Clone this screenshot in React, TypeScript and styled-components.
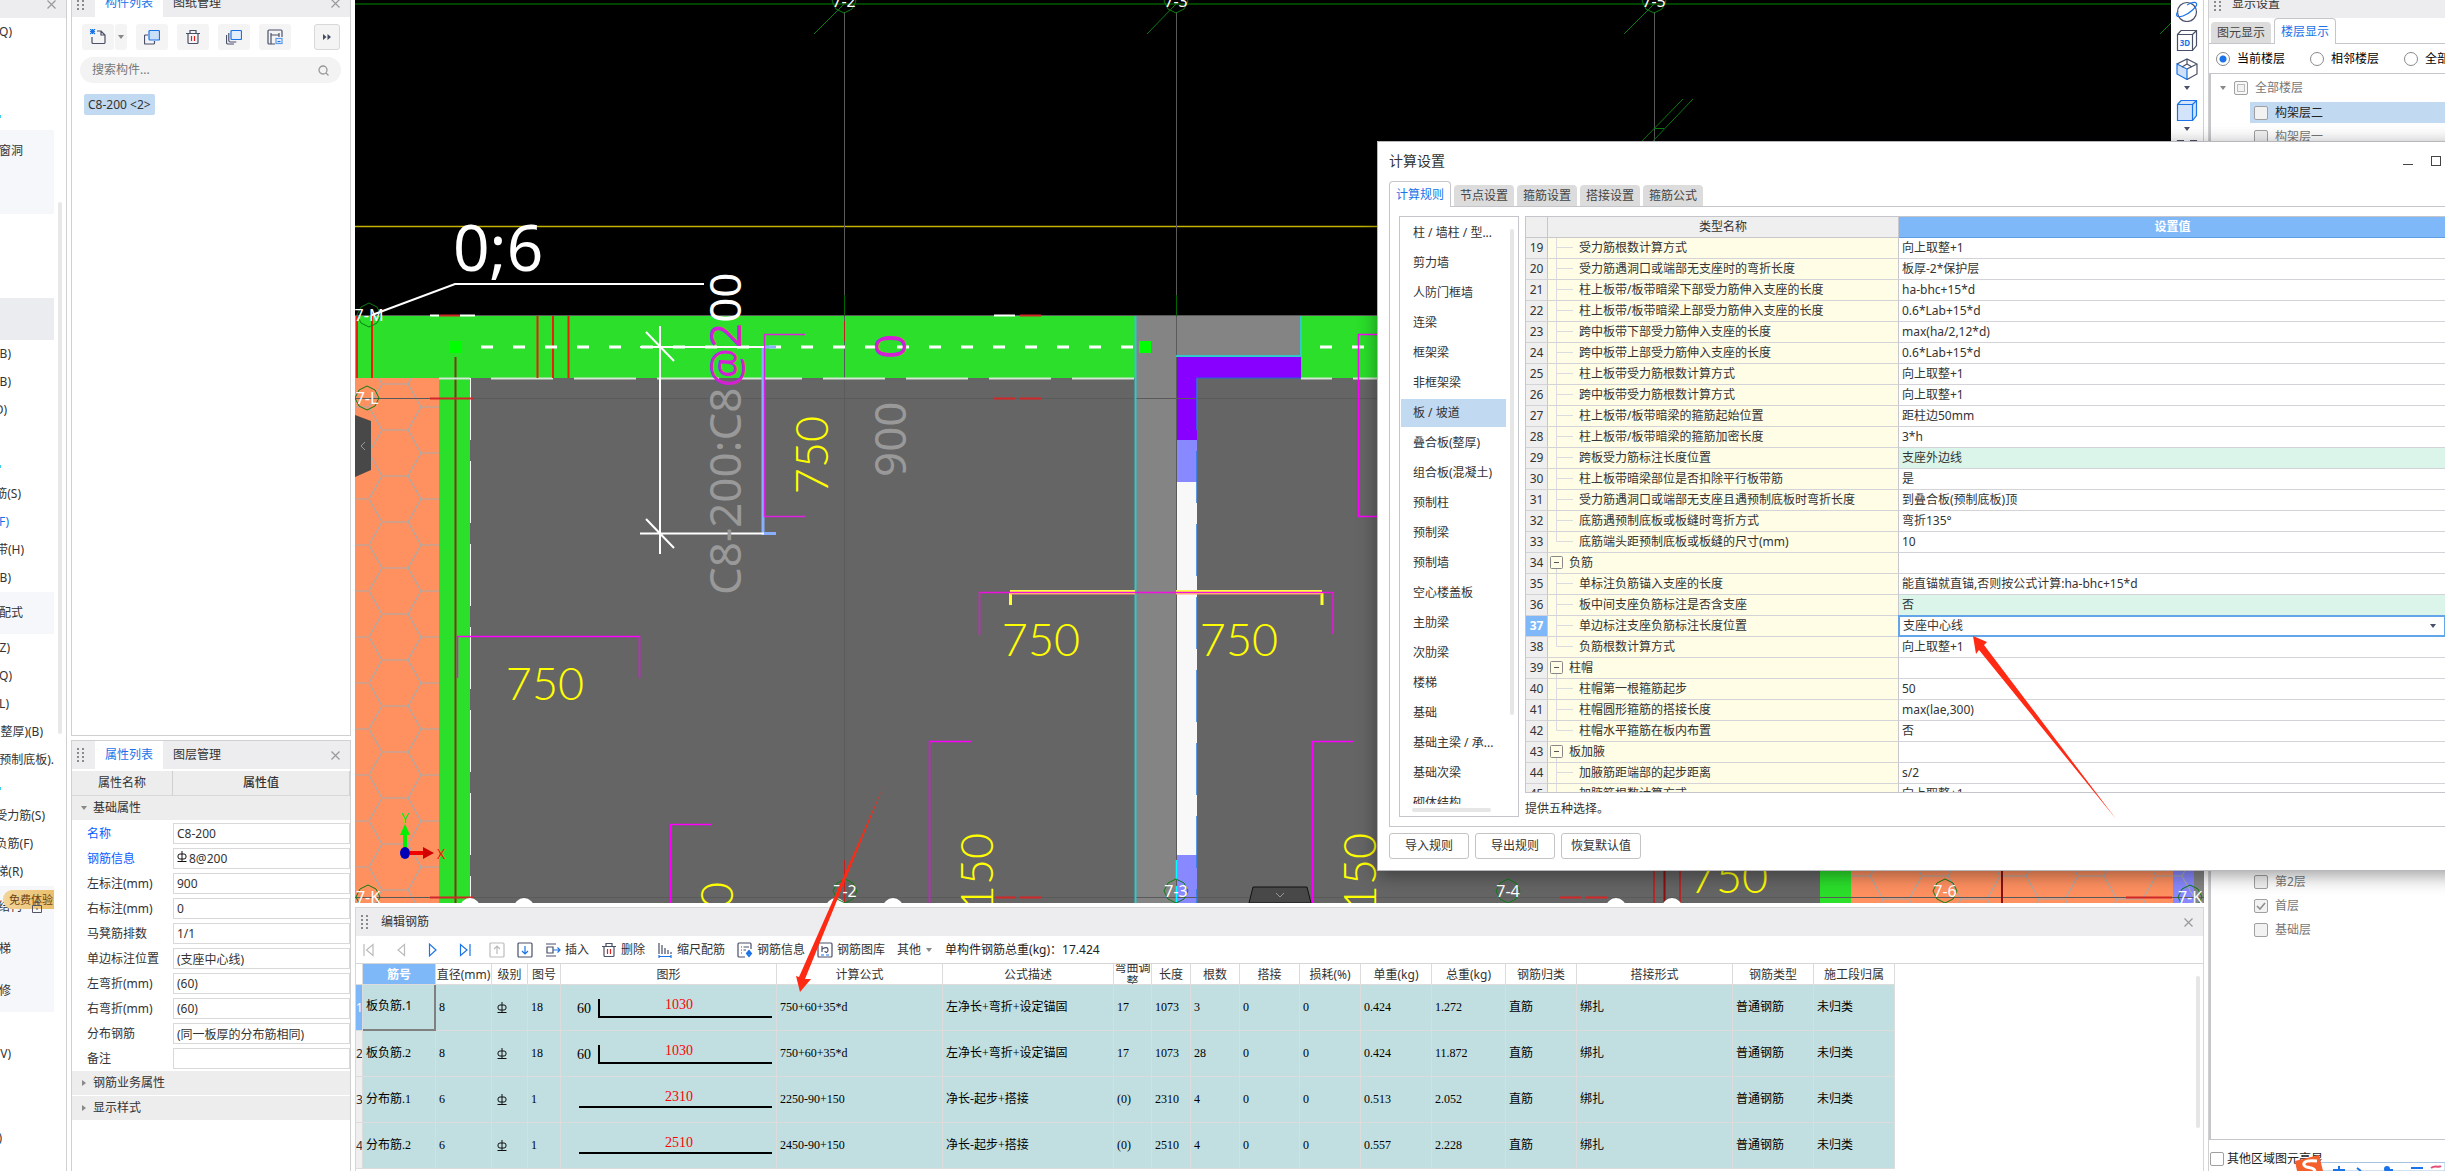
import React from "react";
import styled, { createGlobalStyle, css } from "styled-components";

const UI = `"Noto Sans", "Noto Sans CJK SC", sans-serif`;
const SONG = `"Liberation Serif", "Noto Sans CJK SC", serif`;

const Global = createGlobalStyle`
  *, *::before, *::after { box-sizing: border-box; }
  body { margin: 0; background: #fff; overflow: hidden; }
  body, button, input, select { font-family: ${UI}; font-size: 12px; line-height: 16px; color: #333; }
  button { border: 0; padding: 0; background: none; }
  svg { display: block; flex: none; }
  ul { list-style: none; margin: 0; padding: 0; }
`;

const Page = styled.div`
  position: relative;
  display: flex;
  height: 100vh;
  overflow: hidden;
  background: #fff;
`;

/* ---------- shared parts ---------- */

const PanelHead = styled.div<{ $lift?: number }>`
  display: flex;
  align-items: center;
  flex: none;
  height: 28px;
  margin-top: ${(p) => -(p.$lift ?? 0)}px;
  background: #ededf0;
`;

const Grip = styled.span`
  width: 8px;
  height: 14px;
  margin: 0 10px 0 5px;
  background: radial-gradient(circle at 1px 1px, #8a8a8a 1px, transparent 1px) 0 0 / 5px 4px;
`;

const HeadTab = styled.button<{ $on?: boolean }>`
  height: 28px;
  padding: 0 10px;
  background: ${(p) => (p.$on ? "#fff" : "transparent")};
  color: ${(p) => (p.$on ? "#1a73e8" : "#333")};
`;

const CloseBtn = styled.button`
  margin-left: auto;
  margin-right: 10px;
`;

const Cross = () => (
  <svg width="9" height="9" viewBox="0 0 9 9" stroke="#999" strokeWidth="1.2">
    <path d="M.5.5l8 8M8.5.5l-8 8" />
  </svg>
);

const Caret = ({ c = "#888", right = false }: { c?: string; right?: boolean }) => (
  <svg width="8" height="8" viewBox="0 0 8 8" fill={c}>
    <path d={right ? "M2 1l4 3-4 3z" : "M1 2h6L4 6z"} />
  </svg>
);

const RebarMark = () => (
  <svg width="10" height="12" viewBox="0 0 10 12" fill="none" stroke="#111" strokeWidth="1">
    <path d="M5 0v11M.5 10.500h9" />
    <rect x="1" y="3" width="8" height="5" rx="2" />
  </svg>
);

/* ---------- module navigation (left strip) ---------- */

const Nav = styled.nav`
  position: relative;
  flex: none;
  width: 67px;
  margin-right: 4px;
  border-right: 1px solid #d0d0d0;
  overflow: hidden;
`;
const NavItem = styled.li<{ $end: number; $bg?: string; $tall?: boolean; $color?: string }>`
  position: relative;
  display: flex;
  align-items: center;
  width: 54px;
  height: ${(p) => (p.$tall ? 42 : 28)}px;
  background: ${(p) => p.$bg ?? "transparent"};
  color: ${(p) => p.$color ?? "#333"};
  > span {
    display: flex;
    justify-content: flex-end;
    width: ${(p) => p.$end}px;
    overflow: hidden;
    white-space: nowrap;
  }
`;
const NavDot = styled.i`
  width: 1px;
  height: 3px;
  background: #3fd0e8;
`;
const NavThumb = styled.div`
  position: absolute;
  left: 58px;
  top: 202px;
  width: 4px;
  height: 532px;
  border-radius: 2px;
  background: #e8e8e8;
`;
const Badge = styled.em`
  position: absolute;
  right: 0;
  top: 4px;
  padding: 0 1px 0 6px;
  font-size: 11px;
  line-height: 19px;
  font-style: normal;
  color: #6b4312;
  border-radius: 9px 0 0 9px;
  background: linear-gradient(90deg, #f3d59b, #e9bf6b);
`;
const LockSpot = styled.b`
  position: absolute;
  left: 32px;
  top: 15px;
`;

type NavRow = [string, number, string?, string?];
const PALE = "#f5f7fa";
const navRows: NavRow[] = [
  ["Q)", 12], ["", 0], ["", 0], ["·", 0],
  ["窗洞", 23, PALE], ["", 0, PALE], ["", 0], ["", 0], ["", 0],
  ["", 0, "#ebecf0"],
  ["B)", 11], ["B)", 11], ["D)", 7], ["", 0], ["·", 0],
  ["筋(S)", 21], ["F)", 9, undefined, "#1a73e8"], ["带(H)", 24], ["B)", 11],
  ["配式", 23, PALE],
  ["Z)", 10], ["Q)", 12], ["L)", 9], ["整厚)(B)", 43], ["预制底板).", 54], ["·", 0],
  ["受力筋(S)", 45], ["负筋(F)", 33], ["梯(R)", 23],
  ["结构", 22, PALE], ["梯", 11, PALE], ["修", 11, PALE],
  ["", 0], ["V)", 11], ["", 0], ["", 0], [")", 2], ["", 0],
];

const ModuleNav = () => (
  <Nav>
    <PanelHead $lift={10}>
      <CloseBtn aria-label="关闭"><Cross /></CloseBtn>
    </PanelHead>
    <ul>
      {navRows.map(([t, end, bg, color], i) => (
        <NavItem key={i} $end={end} $bg={bg} $tall={!!bg} $color={color}>
          {t === "·" ? <NavDot /> : <span>{t}</span>}
          {t === "结构" && (
            <>
              <Badge>免费体验</Badge>
              <LockSpot>
                <svg width="10" height="12" viewBox="0 0 10 12" fill="none" stroke="#556">
                  <path d="M.5 4.500h9v7h-9zM3 4.500V2.500a2 2 0 014 0v2M5 7v2" />
                </svg>
              </LockSpot>
            </>
          )}
        </NavItem>
      ))}
    </ul>
    <NavThumb />
  </Nav>
);

/* ---------- component list and property list ---------- */

const SideColumn = styled.div`
  display: flex;
  flex-direction: column;
  flex: none;
  gap: 4px;
  width: 280px;
  margin-right: 4px;
`;
const SidePanel = styled.section<{ $grow?: boolean }>`
  display: flex;
  flex-direction: column;
  border: 1px solid #d0d0d0;
  border-top-width: ${(p) => (p.$grow ? 0 : 1)}px;
  ${(p) => (p.$grow ? "flex: 1; min-height: 0;" : "flex: none; height: 431px; border-bottom: 0;")}
`;
const ToolRow = styled.div`
  display: flex;
  gap: 9px;
  padding: 7px 10px;
`;
const ToolBtn = styled.button<{ $w?: number; $edge?: boolean }>`
  display: flex;
  align-items: center;
  justify-content: center;
  width: ${(p) => p.$w ?? 32}px;
  height: 26px;
  border-radius: 3px;
  background: #f4f4f5;
  ${(p) => p.$edge && css`margin-left: auto; border: 1px solid #d8d8d8;`}
`;
const SplitBtn = styled.div`
  display: flex;
  gap: 1px;
`;
const Search = styled.label`
  display: flex;
  align-items: center;
  height: 26px;
  margin: 0 9px 11px 8px;
  padding: 0 12px;
  border-radius: 13px;
  background: #f3f3f3;
  input {
    flex: 1;
    min-width: 0;
    padding: 0;
    border: 0;
    outline: 0;
    background: none;
  }
  input::placeholder { color: #777; }
`;
const ListItem = styled.button`
  align-self: flex-start;
  height: 21px;
  margin-left: 12px;
  padding: 0 4px;
  border-radius: 2px;
  background: #c2d9f2;
`;

const PropHead = styled.div`
  display: grid;
  grid-template-columns: 101px 1fr;
  height: 27px;
  padding-top: 2px;
  text-align: center;
  line-height: 24px;
  > * { background: #ededed; border-bottom: 1px solid #d8d8d8; border-right: 1px solid #d0d0d0; }
  > b { font-weight: 500; }
`;
const PropGroup = styled.button`
  display: flex;
  align-items: center;
  gap: 5px;
  width: 100%;
  height: 24px;
  margin-bottom: 1px;
  padding-left: 8px;
  background: #ededed;
`;
const PropRow = styled.div`
  position: relative;
  display: grid;
  grid-template-columns: 101px 1fr;
  align-items: center;
  height: 25px;
`;
const PropLabel = styled.label<{ $key?: boolean }>`
  padding-left: 15px;
  color: ${(p) => (p.$key ? "#0a5cff" : "#333")};
`;
const PropInput = styled.input<{ $mark?: boolean }>`
  width: 100%;
  height: 21px;
  padding: 0 3px 0 ${(p) => (p.$mark ? 15 : 3)}px;
  border: 1px solid #d9d9d9;
  background: #fff;
`;
const MarkSpot = styled.span`
  position: absolute;
  left: 105px;
  top: 5px;
`;

const props: [string, string, boolean?][] = [
  ["名称", "C8-200", true],
  ["钢筋信息", "8@200", true],
  ["左标注(mm)", "900"],
  ["右标注(mm)", "0"],
  ["马凳筋排数", "1/1"],
  ["单边标注位置", "(支座中心线)"],
  ["左弯折(mm)", "(60)"],
  ["右弯折(mm)", "(60)"],
  ["分布钢筋", "(同一板厚的分布筋相同)"],
  ["备注", ""],
];

const ico = { width: 16, height: 16, viewBox: "0 0 16 16", fill: "none", stroke: "#4a5068", strokeWidth: 1.2 } as const;

const TrashIcon = () => (
  <svg {...ico}>
    <path d="M1 4.500h14M5 4V1.500h6V4M3 5v8.500c0 .8.500 1 1 1h8c.6 0 1-.3 1-1V5" />
    <path d="M6.500 7v5M9.500 7v5" stroke="#e02020" />
  </svg>
);

const Side = () => (
  <SideColumn>
    <SidePanel $grow>
      <PanelHead $lift={11}>
        <Grip />
        <HeadTab $on>构件列表</HeadTab>
        <HeadTab>图纸管理</HeadTab>
        <CloseBtn aria-label="关闭"><Cross /></CloseBtn>
      </PanelHead>
      <ToolRow>
        <SplitBtn>
          <ToolBtn aria-label="新建">
            <svg {...ico}>
              <path d="M2 8v5.500c0 .6.400 1 1 1h11c.6 0 1-.4 1-1V6l-4-4H7M11 2v4h4" />
              <path d="M0 0l5 5M5 0L0 5M2.500 0v5M0 2.500h5" stroke="#1a73e8" />
            </svg>
          </ToolBtn>
          <ToolBtn $w={12} aria-label="新建选项"><Caret /></ToolBtn>
        </SplitBtn>
        <ToolBtn aria-label="复制">
          <svg {...ico}>
            <path d="M4 6H1.500c-.5 0-1 .4-1 1v7c0 .6.500 1 1 1h8c.6 0 1-.4 1-1v-2" />
            <rect x="5" y="1.500" width="10.500" height="9.500" rx="1" fill="#c9def8" stroke="#1a73e8" />
          </svg>
        </ToolBtn>
        <ToolBtn aria-label="删除"><TrashIcon /></ToolBtn>
        <ToolBtn aria-label="层间复制">
          <svg {...ico}>
            <path d="M.5 6v7.500c0 .6.400 1.500 1.500 1.500h6M2.800 4v7.500c0 .6.400 1.500 1.500 1.500h6" />
            <rect x="5" y="1.500" width="10.500" height="9" rx="1" fill="#e4effc" stroke="#1a73e8" />
          </svg>
        </ToolBtn>
        <ToolBtn aria-label="存档">
          <svg {...ico}>
            <path d="M8 15H2c-.6 0-1-.4-1-1V2c0-.6.400-1 1-1h12c.6 0 1 .4 1 1v6M4 15V4M4 6h8M12 4v4" />
            <rect x="9" y="9.500" width="6" height="5" stroke="#5a9aee" />
            <path d="M10.500 12.500h3" stroke="#1a73e8" />
          </svg>
        </ToolBtn>
        <ToolBtn $w={26} $edge aria-label="更多">
          <svg width="8" height="6" viewBox="0 0 8 6" fill="#444b60"><path d="M0 0l3.500 3L0 6zM4.500 0L8 3 4.500 6z" /></svg>
        </ToolBtn>
      </ToolRow>
      <Search>
        <input aria-label="搜索构件" placeholder="搜索构件..." />
        <svg width="11" height="11" viewBox="0 0 11 11" fill="none" stroke="#999" strokeWidth="1.300">
          <circle cx="5" cy="5" r="4" /><path d="M8 8l2.500 2.500" />
        </svg>
      </Search>
      <ListItem>C8-200 &lt;2&gt;</ListItem>
    </SidePanel>
    <SidePanel>
      <PanelHead>
        <Grip />
        <HeadTab $on>属性列表</HeadTab>
        <HeadTab>图层管理</HeadTab>
        <CloseBtn aria-label="关闭"><Cross /></CloseBtn>
      </PanelHead>
      <PropHead><span>属性名称</span><b>属性值</b></PropHead>
      <PropGroup><Caret /> 基础属性</PropGroup>
      {props.map(([k, v, key], i) => (
        <PropRow key={k}>
          <PropLabel htmlFor={`prop${i}`} $key={key}>{k}</PropLabel>
          <PropInput id={`prop${i}`} defaultValue={v} $mark={i === 1} />
          {i === 1 && <MarkSpot><RebarMark /></MarkSpot>}
        </PropRow>
      ))}
      <PropGroup><Caret right /> 钢筋业务属性</PropGroup>
      <PropGroup><Caret right /> 显示样式</PropGroup>
    </SidePanel>
  </SideColumn>
);

/* ---------- drawing canvas ---------- */

const Center = styled.main`
  display: flex;
  flex-direction: column;
  flex: 1;
  min-width: 0;
  margin-right: 4px;
`;
const Canvas = styled.div`
  position: relative;
  flex: 1;
  min-height: 0;
  margin-bottom: 4px;
  background: #000;
  overflow: hidden;
  > svg { width: 100%; height: 100%; }
`;
const ViewTools = styled.div`
  position: absolute;
  top: 0;
  right: 0;
  display: flex;
  flex-direction: column;
  align-items: center;
  gap: 7px;
  width: 33px;
  height: 320px;
  border-right: 1px solid #d0d0d0;
  background: #fff;
`;
const ViewBtn = styled.button`
  display: flex;
  flex-direction: column;
  align-items: center;
  gap: 4px;
`;

const CAD = `"Liberation Sans Narrow", Lato, "Noto Sans", sans-serif`;

const Dim = ({ x, y, t = "750", up = false }: { x: number; y: number; t?: string; up?: boolean }) => (
  <text
    x={x} y={y} fill="#ffff00" fontFamily={CAD} fontWeight={300} fontSize={45}
    textAnchor="middle" dominantBaseline="central" transform={up ? `rotate(-90 ${x} ${y})` : undefined}
  >{t}</text>
);

const Axis = ({ x, y, t }: { x: number; y: number; t: string }) => (
  <g>
    <path
      d={`M${x} ${y - 12}l8 4 4 8-4 8-8 4-8-4-4-8 4-8z`}
      fill="none" stroke="#0a7d12" strokeWidth="1"
    />
    <text x={x} y={y} fill="#fff" fontFamily={UI} fontSize={16} textAnchor="middle" dominantBaseline="central">{t}</text>
  </g>
);

const HEX = "M0 23L13 0H39L52 23H78M52 23L39 46H13L0 23";

const Drawing = () => (
  <svg viewBox="355 0 1849 903" preserveAspectRatio="xMinYMin slice" fill="none">
    <defs>
      <pattern id="hexA" x="369" y="384" width="78" height="46" patternUnits="userSpaceOnUse">
        <path d={HEX} stroke="#a9a9a9" strokeWidth="1.200" />
      </pattern>
      <pattern id="hexB" x="1987" y="876" width="78" height="46" patternUnits="userSpaceOnUse">
        <path d={HEX} stroke="#a9a9a9" strokeWidth="1.200" />
      </pattern>
    </defs>

    <g fill="#656565">
      <rect x="470" y="378" width="665" height="525" />
      <rect x="1197" y="378" width="623" height="525" />
    </g>
    <rect x="355" y="378" width="84" height="525" fill="#ff9060" />
    <rect x="355" y="378" width="84" height="525" fill="url(#hexA)" />
    <rect x="1851" y="860" width="322" height="43" fill="#ff9060" />
    <g fill="#2bdf2b">
      <rect x="355" y="316" width="780" height="62" />
      <rect x="1301" y="316" width="519" height="62" />
      <rect x="439" y="378" width="31" height="525" />
      <rect x="1820" y="860" width="31" height="43" />
    </g>
    <path d="M1135 316h166v41h-125v546h-41z" fill="#848484" />
    <path d="M1176 357h125v21h-104v62h-21z" fill="#8800ff" />
    <rect x="1176" y="440" width="21" height="42" fill="#8888ff" />
    <rect x="1176" y="482" width="21" height="373" fill="#f8f8f8" />
    <rect x="1176" y="855" width="21" height="48" fill="#8888ff" />
    <rect x="2173" y="860" width="21" height="43" fill="#8888ff" />
    <rect x="2194" y="860" width="10" height="43" fill="#848484" />
    <rect x="1851" y="860" width="342" height="43" fill="url(#hexB)" />

    <path d="M355 4H2204" stroke="#004400" strokeWidth="2" />
    <path d="M355 226.500H2204" stroke="#c4b400" strokeWidth="1.500" />
    <g stroke="#5a5a5a">
      <path d="M844.500 12V903M1176.500 12V903M1654.500 12V141M355 398.500H1820M355 897.500H2204M355 315.500H1820" />
    </g>
    <path d="M844.500 295V316M1176.500 295V316" stroke="#006400" />
    <path d="M844.500 321V341M844.500 860V903" stroke="#c02020" />
    <g stroke="#0a7a14">
      <path d="M814 34L844 4M1147 34L1176 4M1624 34L1654 4M2160 34L2190 4M1642 141L1683 99M1653 141L1693 99M1654 128.500h10" />
    </g>
    <path d="M455.500 357V903" stroke="#7a3b14" strokeWidth="2" />
    <path d="M470.500 378V903" stroke="#fff" strokeDasharray="62 21" />
    <path d="M439 378.500h31M491 378.500H1135" stroke="#d4e6d4" strokeWidth="2" strokeDasharray="62 21" />
    <path d="M1301 378.500H1377" stroke="#d4e6d4" strokeWidth="2" strokeDasharray="31 21" />
    <g stroke="#e8200c" strokeWidth="2">
      <path d="M357 316v62M372 316v62M537.500 316v62M553 316v62M568.500 316v62" />
    </g>
    <path d="M430 398.500h44M994 398.500h21M1020 398.500h21M439 315.500h21M1020 315.500h21M430 897.500h44M995 897.500h21M1020 897.500h21M1560 897.500h21M1586 897.500h21M2126 897.500h46" stroke="#d02828" strokeWidth="2" />
    <path d="M430 315.500h9M460 315.500h15M994 315.500h21" stroke="#fff" strokeWidth="2" />
    <path d="M1654 860v43M1680 860v43" stroke="#b02a2a" strokeWidth="2" />
    <path d="M1664.500 860v43M2002 860v43" stroke="#8a1010" strokeWidth="2" />
    <path d="M1135.500 316V903M1301 316v41M1176 356h125" stroke="#30c8c8" strokeWidth="2" />
    <path d="M1176.500 860V903" stroke="#00ffff" strokeDasharray="20 6" strokeWidth="1.500" />
    <path d="M1197 378h104" stroke="#2060e0" />
    <path d="M1197 378V903" stroke="#2878d8" strokeDasharray="52 21" strokeWidth="1.500" />
    <path d="M481 347H1135M1320 347h57" stroke="#fff" strokeWidth="3" strokeDasharray="12 20" />
    <path d="M449 341h12v12h-12zM1139 341h12v12h-12z" fill="#00ff00" />

    <g stroke="#ff00ff" strokeWidth="1.500">
      <path d="M457.500 678V636.500H639.500V678" />
      <path d="M670.500 903V824.500H711M929.500 903V741.500H971M1312.500 903V741.500H1353" />
      <path d="M1377 334.500H1358.500V516.500H1377" />
    </g>
    <path d="M763 347V533.500H776M763 347H776" stroke="#88b0ff" strokeWidth="3" />
    <path d="M805 334.500H764.500V516.500H805" stroke="#e020e0" strokeWidth="1.500" />
    <path d="M1010.500 605V592.500M1322 605V592.500" stroke="#ffff30" strokeWidth="3" />
    <path d="M1010 592H1135M1176 592H1322" stroke="#ffff40" strokeWidth="4" />
    <path d="M979.500 635V592.500H1333V634" stroke="#f010e0" strokeWidth="1.500" />
    <path d="M1010 594h125M1176 594h146" stroke="#ff9a80" />

    <g stroke="#fff" strokeWidth="2">
      <path d="M372 315L455 284H704" />
      <path d="M660 326V554M640 347H764M640 533.500H764M646 332L674 361M646 519L674 548" />
    </g>

    <text x="453" y="271" fill="#fff" fontFamily={UI} fontSize={64}>0;6</text>
    <text transform="translate(741 595) rotate(-90)" fontFamily={UI} fontSize={44} fill="#999">
      C8-200:C8<tspan fill="#d420d4">@2</tspan><tspan fill="#fff">00</tspan>
    </text>
    <text transform="translate(906 477) rotate(-90)" fontFamily={UI} fontSize={44} fill="#999">900</text>
    <text transform="translate(906 359) rotate(-90)" fontFamily={UI} fontSize={44} fill="#d420d4">0</text>

    <Dim x={811} y={455} up />
    <Dim x={545} y={683} />
    <Dim x={1041} y={639} />
    <Dim x={1239} y={639} />
    <Dim x={976} y={872} t="150" up />
    <Dim x={1359} y={872} t="150" up />
    <Dim x={716} y={895} t="0" up />
    <Dim x={1729} y={876} />

    <g fill="#fff">
      {[470, 524, 836, 893, 1616, 1672].map((x) => <circle key={x} cx={x} cy="908" r="10" />)}
    </g>
    <Axis x={844} y={1} t="7-2" />
    <Axis x={1176} y={1} t="7-3" />
    <Axis x={1654} y={1} t="7-5" />
    <Axis x={369} y={315} t="7-M" />
    <Axis x={367} y={398} t="7-L" />
    <Axis x={368} y={897} t="7-K" />
    <Axis x={845} y={891} t="7-2" />
    <Axis x={1176} y={891} t="7-3" />
    <Axis x={1508} y={891} t="7-4" />
    <Axis x={1945} y={891} t="7-6" />
    <Axis x={2190} y={897} t="7-K" />

    <path d="M405 848V833" stroke="#00f000" strokeWidth="4" />
    <path d="M400 835l5-11 5 11z" fill="#00f000" />
    <path d="M410 853H424" stroke="#f00000" strokeWidth="4" />
    <path d="M423 847l11 6-11 6z" fill="#d00000" />
    <ellipse cx="405" cy="853" rx="5" ry="6" fill="#0000b8" />
    <text x="405" y="817" fill="#00f000" fontFamily={UI} fontSize={14} textAnchor="middle" dominantBaseline="central">Y</text>
    <text x="441" y="853" fill="#f02010" fontFamily={UI} fontSize={14} textAnchor="middle" dominantBaseline="central">X</text>

    <path d="M355 415l16 6v49l-16 7z" fill="#484848" />
    <path d="M365 442l-4 4 4 4" stroke="#999" />
    <path d="M1249 903l4-16h54l4 16z" fill="#484848" stroke="#111" />
    <path d="M1276 893l4 4 4-4" stroke="#999" />
  </svg>
);

const cube = { width: 22, height: 22, viewBox: "0 0 22 22", fill: "none", strokeWidth: 1.2 } as const;

const ViewToolbar = () => (
  <ViewTools>
    <ViewBtn aria-label="动态观察">
      <svg {...cube} stroke="#4a5068">
        <circle cx="11" cy="12" r="9.500" />
        <path d="M2 11c-3 5-1 7 5 5S22 6 20.500 3.500 15 3 11 5" stroke="#1a73e8" />
      </svg>
    </ViewBtn>
    <ViewBtn aria-label="三维">
      <svg {...cube} stroke="#4a5068">
        <path d="M1.500 5.500h15v16h-15zM1.500 5.500L5 1.500h15.500v15l-4 5M16.500 5.500l4-4" />
        <text x="9" y="17" fontFamily={UI} fontSize="8" fontWeight="700" fill="#1a73e8" stroke="none" textAnchor="middle">3D</text>
      </svg>
    </ViewBtn>
    <ViewBtn aria-label="视图方向">
      <svg {...cube} stroke="#4a5068">
        <path d="M1 6l10 5v10.500L1 16z" fill="#cfe1f8" stroke="#1a73e8" />
        <path d="M1 6l10-5 10 5v10l-10 5.500M11 11l10-5M11 1v5M11 6l-5 3M11 6l5 3" />
      </svg>
      <Caret c="#4a5068" />
    </ViewBtn>
    <ViewBtn aria-label="显示方式">
      <svg {...cube} stroke="#1a73e8">
        <path d="M1.500 5.500L5 1.500h15.500v15l-4 5h-15z" fill="#d3e4fa" />
        <path d="M1.500 5.500h15v16M16.500 5.500l4-4" />
      </svg>
      <Caret c="#4a5068" />
    </ViewBtn>
    <ViewBtn aria-label="全屏">
      <svg {...cube} stroke="#4a5068"><path d="M1.500 6V.5H8M14 .5h6.500V6" /></svg>
    </ViewBtn>
  </ViewTools>
);

/* ---------- rebar editor (bottom) ---------- */

const Editor = styled.section`
  display: flex;
  flex-direction: column;
  flex: none;
  height: 264px;
  border: 1px solid #d6d6d6;
  border-bottom: 0;
`;
const EditorTitle = styled.span`
  padding-left: 2px;
`;
const EditorTools = styled.div`
  display: flex;
  align-items: center;
  gap: 12px;
  height: 27px;
  padding-left: 5px;
  color: #222;
  white-space: nowrap;
`;
const StepGroup = styled.div`
  display: flex;
  gap: 16px;
`;
const TextBtn = styled.button`
  display: flex;
  align-items: center;
  gap: 4px;
`;
const EditorBody = styled.div`
  position: relative;
  flex: 1;
  min-height: 0;
  overflow: hidden;
  border-top: 1px solid #d6d6d6;
`;
const EditorThumb = styled.div`
  position: absolute;
  right: 3px;
  top: 12px;
  width: 4px;
  height: 152px;
  border-radius: 2px;
  background: #e6e6e6;
`;
const BarTable = styled.table`
  table-layout: fixed;
  width: 1539px;
  border-collapse: separate;
  border-spacing: 0;
  th, td {
    padding: 0;
    border-right: 1px solid #dcdcdc;
    border-bottom: 1px solid #dcdcdc;
    overflow: hidden;
    white-space: nowrap;
  }
  thead th { height: 21px; padding-top: 2px; font-weight: 400; line-height: 18px; }
  tbody td {
    height: 46px;
    padding: 0 3px 2px;
    background: #c1dfe1;
    color: #000;
    font-family: ${SONG};
  }
`;
const WrapHead = styled.span`
  display: flex;
  align-items: center;
  justify-content: center;
  height: 18px;
  line-height: 14px;
  white-space: normal;
`;
const HotTh = styled.th`
  background: #7fb8f9;
  color: #fff;
  b { font-weight: 700; }
`;
const RowNo = styled.th<{ $on?: boolean }>`
  background: ${(p) => (p.$on ? "#7fb8f9" : "#efefef")};
  color: ${(p) => (p.$on ? "#fff" : "#333")};
  font-weight: 400;
`;
const Cell = styled.td<{ $sel?: boolean }>`
  ${(p) => p.$sel && css`
    && { font-family: ${UI}; border-right: 2px solid #808080; border-bottom: 2px solid #808080; }
  `}
`;
const MarkCell = styled.td`
  && { padding-left: 5px; padding-bottom: 0; }
`;
const ShapeCell = styled.td`
  && { padding: 0; }
`;

const Shape = ({ n, hook }: { n: string; hook?: string }) => (
  <svg width="215" height="45" viewBox="0 0 215 45" fontFamily={SONG} fontSize="14">
    {hook ? (
      <>
        <text x="16" y="28" fill="#000">{hook}</text>
        <path d="M38 14V32H211" fill="none" stroke="#000" strokeWidth="2" />
      </>
    ) : (
      <path d="M18 30H211" stroke="#000" strokeWidth="2" />
    )}
    <text x="118" y="24" fill="#f00" textAnchor="middle">{n}</text>
  </svg>
);

const barCols = [7, 73, 56, 36, 33, 216, 166, 171, 38, 39, 49, 60, 61, 71, 74, 71, 156, 81, 81];
const barHeads = ["直径(mm)", "级别", "图号", "图形", "计算公式", "公式描述", "弯曲调整", "长度", "根数", "搭接", "损耗(%)", "单重(kg)", "总重(kg)", "钢筋归类", "搭接形式", "钢筋类型", "施工段归属"];

interface Bar { name: string; d: string; fig: string; n: string; hook?: string; f: string; desc: string; rest: string[] }
const tail = ["直筋", "绑扎", "普通钢筋", "未归类"];
const bars: Bar[] = [
  { name: "板负筋.1", d: "8", fig: "18", n: "1030", hook: "60", f: "750+60+35*d", desc: "左净长+弯折+设定锚固", rest: ["17", "1073", "3", "0", "0", "0.424", "1.272", ...tail] },
  { name: "板负筋.2", d: "8", fig: "18", n: "1030", hook: "60", f: "750+60+35*d", desc: "左净长+弯折+设定锚固", rest: ["17", "1073", "28", "0", "0", "0.424", "11.872", ...tail] },
  { name: "分布筋.1", d: "6", fig: "1", n: "2310", f: "2250-90+150", desc: "净长-起步+搭接", rest: ["(0)", "2310", "4", "0", "0", "0.513", "2.052", ...tail] },
  { name: "分布筋.2", d: "6", fig: "1", n: "2510", f: "2450-90+150", desc: "净长-起步+搭接", rest: ["(0)", "2510", "4", "0", "0", "0.557", "2.228", ...tail] },
];

const RebarEditor = () => (
  <Editor>
    <PanelHead>
      <Grip />
      <EditorTitle>编辑钢筋</EditorTitle>
      <CloseBtn aria-label="关闭"><Cross /></CloseBtn>
    </PanelHead>
    <EditorTools>
      <StepGroup>
        <button aria-label="首行"><svg {...ico} stroke="#bbb"><path d="M3 2v12M12 2.500v11L5.500 8z" /></svg></button>
        <button aria-label="上一行"><svg {...ico} stroke="#bbb"><path d="M11.500 2.500v11L5 8z" /></svg></button>
        <button aria-label="下一行"><svg {...ico} stroke="#1a73e8"><path d="M4.500 2v12L11 8z" /></svg></button>
        <button aria-label="末行"><svg {...ico} stroke="#1a73e8"><path d="M3.500 2.500v11L10 8zM13 2v12" /></svg></button>
        <button aria-label="上移"><svg {...ico} stroke="#bbb"><rect x="1" y="1" width="14" height="14" rx="1" /><path d="M8 12V4M5 7l3-3 3 3" /></svg></button>
      </StepGroup>
      <button aria-label="下移"><svg {...ico}><rect x="1" y="1" width="14" height="14" rx="1" /><path d="M8 4v8M5 9l3 3 3-3" stroke="#1a73e8" /></svg></button>
      <TextBtn>
        <svg {...ico}><path d="M1 2h10M1 14h10M2 5h6v6H2z" /><path d="M8 8h7M12.500 5.500L15 8l-2.500 2.500" stroke="#1a73e8" /></svg>插入
      </TextBtn>
      <TextBtn><TrashIcon />删除</TextBtn>
      <TextBtn>
        <svg {...ico}><path d="M2 1v11M5 3v9M8 6v6M11 8v4M14 10v2" /><path d="M2 14.500h12M2 13v3M14 13v3" stroke="#1a73e8" /></svg>缩尺配筋
      </TextBtn>
      <TextBtn>
        <svg {...ico}><path d="M8 15H2c-.6 0-1-.4-1-1V2c0-.6.400-1 1-1h11c.6 0 1 .4 1 1v5M4 5h1M6.500 5H12M4 8h1M6.500 8H9M4 11h1" /><path d="M12 8v7M9 11.500h6M9.500 11.500l2.500-3 2.500 3-2.500 3z" stroke="#1a73e8" /></svg>钢筋信息
      </TextBtn>
      <TextBtn>
        <svg {...ico}><rect x="1" y="1" width="14" height="14" rx="1" /><path d="M5 4v6M5 7c4-2 6-2 6 1s-3 3-3 1" /><path d="M4 13h3M9 13h3" stroke="#1a73e8" /></svg>钢筋图库
      </TextBtn>
      <TextBtn>其他<Caret /></TextBtn>
      <span>单构件钢筋总重(kg)：17.424</span>
    </EditorTools>
    <EditorBody>
      <BarTable>
        <colgroup>{barCols.map((w, i) => <col key={i} width={w} />)}</colgroup>
        <thead>
          <tr>
            <th />
            <HotTh><b>筋号</b></HotTh>
            {barHeads.map((h) => <th key={h}>{h === "弯曲调整" ? <WrapHead>{h}</WrapHead> : h}</th>)}
          </tr>
        </thead>
        <tbody>
          {bars.map((b, i) => (
            <tr key={b.name}>
              <RowNo $on={i === 0}>{i + 1}</RowNo>
              <Cell $sel={i === 0}>{b.name}</Cell>
              <td>{b.d}</td>
              <MarkCell><RebarMark /></MarkCell>
              <td>{b.fig}</td>
              <ShapeCell><Shape n={b.n} hook={b.hook} /></ShapeCell>
              <td>{b.f}</td>
              <td>{b.desc}</td>
              {b.rest.map((v, k) => <td key={k}>{v}</td>)}
            </tr>
          ))}
        </tbody>
      </BarTable>
      <EditorThumb />
    </EditorBody>
  </Editor>
);

/* ---------- display settings (right) ---------- */

const Right = styled.aside`
  display: flex;
  flex-direction: column;
  flex: none;
  width: 237px;
  border-left: 1px solid #d0d0d0;
  overflow: hidden;
`;
const Tabs = styled.div<{ $gap: number }>`
  display: flex;
  align-items: flex-end;
  flex: none;
  gap: ${(p) => p.$gap}px;
  height: 26px;
  border-bottom: 1px solid #c4c6cc;
`;
const Tab = styled.button<{ $on?: boolean }>`
  height: ${(p) => (p.$on ? 26 : 21)}px;
  padding: 0 6px;
  border-radius: 4px 4px 0 0;
  white-space: nowrap;
  color: ${(p) => (p.$on ? "#1a73e8" : "#444")};
  background: ${(p) => (p.$on ? "#fff" : "#dcdcdc")};
  ${(p) => p.$on && css`margin-bottom: -1px; border: 1px solid #c4c6cc; border-bottom: 0;`}
`;
const RightTabs = styled.div`
  ${Tabs} { padding-left: 2px; }
`;
const Radios = styled.div`
  display: flex;
  flex: none;
  align-items: center;
  gap: 25px;
  height: 29px;
  padding-left: 7px;
  color: #000;
  white-space: nowrap;
  label { display: flex; align-items: center; gap: 7px; }
  input {
    appearance: none;
    width: 14px;
    height: 14px;
    margin: 0;
    border: 1px solid #8a8a8a;
    border-radius: 50%;
  }
  input:checked { background: radial-gradient(circle, #1a73e8 3px, transparent 4px); }
`;
const Tree = styled.div`
  display: flex;
  flex-direction: column;
  justify-content: space-between;
  flex: 1;
  padding: 2px 0 196px;
  border: 1px solid #c4c6cc;
  border-left-width: 2px;
  border-right: 0;
`;
const Check = styled.input`
  appearance: none;
  flex: none;
  width: 14px;
  height: 14px;
  margin: 0;
  border: 1px solid #a0a0a0;
  border-radius: 2px;
  background: #f2f2f2;
`;
const TickBox = styled.span`
  position: relative;
  display: flex;
  svg { position: absolute; left: 2px; top: 3px; }
`;
const RootCheck = styled(Check)`
  box-shadow: inset 0 0 0 2px #f8f8f8, inset 0 0 0 3px #bbb;
`;
const RootRow = styled.label`
  display: flex;
  align-items: center;
  gap: 7px;
  height: 24px;
  padding-left: 8px;
  color: #777;
`;
const FloorRow = styled.label<{ $on?: boolean }>`
  display: flex;
  align-items: center;
  gap: 7px;
  height: 21px;
  margin: 2px 0 3px 39px;
  padding-left: 4px;
  color: ${(p) => (p.$on ? "#222" : "#777")};
  background: ${(p) => (p.$on ? "#c2d9f2" : "none")};
`;
const OtherRow = styled.label`
  display: flex;
  align-items: center;
  gap: 3px;
  height: 31px;
  padding: 7px 0 0 1px;
  color: #222;
  ${Check} { background: #fff; }
`;

const DisplaySettings = () => (
  <Right>
    <PanelHead $lift={10}><Grip />显示设置</PanelHead>
    <RightTabs>
      <Tabs $gap={3}>
        <Tab>图元显示</Tab>
        <Tab $on>楼层显示</Tab>
      </Tabs>
    </RightTabs>
    <Radios role="radiogroup" aria-label="楼层范围">
      <label><input type="radio" name="range" defaultChecked />当前楼层</label>
      <label><input type="radio" name="range" />相邻楼层</label>
      <label><input type="radio" name="range" />全部楼层</label>
    </Radios>
    <Tree>
      <div>
        <RootRow><Caret /><RootCheck type="checkbox" disabled />全部楼层</RootRow>
        <FloorRow $on><Check type="checkbox" disabled />构架层二</FloorRow>
        <FloorRow><Check type="checkbox" disabled />构架层一</FloorRow>
      </div>
      <div>
        <FloorRow><Check type="checkbox" disabled />第2层</FloorRow>
        <FloorRow>
          <TickBox>
            <Check type="checkbox" disabled defaultChecked />
            <svg width="10" height="8" viewBox="0 0 10 8" fill="none" stroke="#8a8a8a" strokeWidth="1.500"><path d="M1 4l3 3 5-6" /></svg>
          </TickBox>
          首层
        </FloorRow>
        <FloorRow><Check type="checkbox" disabled />基础层</FloorRow>
      </div>
    </Tree>
    <OtherRow><Check type="checkbox" />其他区域图元亮显</OtherRow>
  </Right>
);

/* ---------- calculation settings window ---------- */

const Dialog = styled.section`
  position: absolute;
  left: 1377px;
  right: -36px;
  top: 141px;
  height: 730px;
  display: flex;
  flex-direction: column;
  padding: 0 11px 11px;
  border: 1px solid #b8b8bc;
  background: #fff;
  box-shadow: 0 4px 18px rgba(0, 0, 0, 0.4);
`;
const TitleBar = styled.header`
  display: flex;
  align-items: center;
  flex: none;
  height: 39px;
  padding-bottom: 2px;
  font-size: 14px;
  line-height: 20px;
  > div { display: flex; gap: 18px; margin-left: auto; padding-right: 28px; }
`;
const DialogBody = styled.div`
  display: flex;
  flex: 1;
  min-height: 0;
  gap: 6px;
  padding: 9px 20px 9px 9px;
  border: 1px solid #c4c6cc;
  border-top: 0;
`;
const KindBox = styled.div`
  position: relative;
  flex: none;
  width: 120px;
  padding: 2px 2px 12px 1px;
  border: 1px solid #c4c6cc;
  ul { height: 100%; overflow: hidden; }
  li { height: 30px; }
`;
const Kind = styled.button<{ $on?: boolean }>`
  display: block;
  width: 105px;
  height: 28px;
  padding-left: 12px;
  text-align: left;
  white-space: nowrap;
  background: ${(p) => (p.$on ? "#c2d9f2" : "none")};
`;
const Thumb = styled.i<{ $h?: boolean }>`
  position: absolute;
  border-radius: 2px;
  background: #e6e6e6;
  ${(p) => (p.$h ? "left: 12px; bottom: 4px; width: 79px; height: 4px;" : "right: 4px; top: 12px; width: 4px; height: 486px;")}
`;
const RuleArea = styled.div`
  display: flex;
  flex-direction: column;
  flex: 1;
  min-width: 0;
  p { flex: none; height: 24px; margin: 0; padding-top: 8px; }
`;
const RuleClip = styled.div`
  flex: 1;
  min-height: 0;
  overflow: hidden;
  border: 1px solid #c4c6cc;
`;
const RuleTable = styled.table`
  table-layout: fixed;
  width: 100%;
  border-collapse: separate;
  border-spacing: 0;
  th, td {
    height: 21px;
    padding: 0;
    line-height: 18px;
    font-weight: 400;
    text-align: left;
    white-space: nowrap;
    border-right: 1px solid #c8c8cc;
    border-bottom: 1px solid #d4d4d8;
  }
  thead th { background: #efefef; text-align: center; border-bottom-color: #c8c8cc; }
`;
const ValueHead = styled.th`
  && { background: #7fb8f9; color: #fff; font-weight: 700; border-bottom-color: #5c9fe6; }
`;
const IndexCell = styled.th<{ $on?: boolean }>`
  && {
    text-align: center;
    background: ${(p) => (p.$on ? "#7fb8f9" : "#efefef")};
    color: ${(p) => (p.$on ? "#fff" : "#333")};
    font-weight: ${(p) => (p.$on ? 700 : 400)};
  }
`;
const NameCell = styled.td`
  background: #fffde5;
`;
const NameLine = styled.div`
  display: flex;
  align-items: center;
  height: 20px;
  svg { margin-right: 5px; }
`;
const ValueCell = styled.td<{ $hit?: boolean; $edit?: boolean }>`
  && {
    padding-left: ${(p) => (p.$edit ? 0 : 3)}px;
    background: ${(p) => (p.$hit ? "#dcf5ea" : "#fff")};
  }
`;
const ValueSelect = styled.div`
  display: flex;
  align-items: center;
  height: 22px;
  margin: -1px 0 -1px -1px;
  padding-right: 7px;
  border: 2px solid #62a5e8;
  select {
    appearance: none;
    flex: 1;
    height: 18px;
    padding: 0 0 0 3px;
    border: 0;
    outline: 0;
    background: #fff;
  }
`;
const Footer = styled.footer`
  display: flex;
  flex: none;
  gap: 6px;
  padding-top: 6px;
`;
const FootBtn = styled.button`
  width: 80px;
  height: 26px;
  border: 1px solid #c4c4c4;
  border-radius: 3px;
  background: #fff;
`;

const kinds = ["柱 / 墙柱 / 型...", "剪力墙", "人防门框墙", "连梁", "框架梁", "非框架梁", "板 / 坡道", "叠合板(整厚)", "组合板(混凝土)", "预制柱", "预制梁", "预制墙", "空心楼盖板", "主肋梁", "次肋梁", "楼梯", "基础", "基础主梁 / 承...", "基础次梁", "砌体结构"];

type Rule = [string, string, ("group" | "last" | "hit" | "edit")?];
const rules: Rule[] = [
  ["受力筋根数计算方式", "向上取整+1"],
  ["受力筋遇洞口或端部无支座时的弯折长度", "板厚-2*保护层"],
  ["柱上板带/板带暗梁下部受力筋伸入支座的长度", "ha-bhc+15*d"],
  ["柱上板带/板带暗梁上部受力筋伸入支座的长度", "0.6*Lab+15*d"],
  ["跨中板带下部受力筋伸入支座的长度", "max(ha/2,12*d)"],
  ["跨中板带上部受力筋伸入支座的长度", "0.6*Lab+15*d"],
  ["柱上板带受力筋根数计算方式", "向上取整+1"],
  ["跨中板带受力筋根数计算方式", "向上取整+1"],
  ["柱上板带/板带暗梁的箍筋起始位置", "距柱边50mm"],
  ["柱上板带/板带暗梁的箍筋加密长度", "3*h"],
  ["跨板受力筋标注长度位置", "支座外边线", "hit"],
  ["柱上板带暗梁部位是否扣除平行板带筋", "是"],
  ["受力筋遇洞口或端部无支座且遇预制底板时弯折长度", "到叠合板(预制底板)顶"],
  ["底筋遇预制底板或板缝时弯折方式", "弯折135°"],
  ["底筋端头距预制底板或板缝的尺寸(mm)", "10", "last"],
  ["负筋", "", "group"],
  ["单标注负筋锚入支座的长度", "能直锚就直锚,否则按公式计算:ha-bhc+15*d"],
  ["板中间支座负筋标注是否含支座", "否", "hit"],
  ["单边标注支座负筋标注长度位置", "支座中心线", "edit"],
  ["负筋根数计算方式", "向上取整+1", "last"],
  ["柱帽", "", "group"],
  ["柱帽第一根箍筋起步", "50"],
  ["柱帽圆形箍筋的搭接长度", "max(lae,300)"],
  ["柱帽水平箍筋在板内布置", "否", "last"],
  ["板加腋", "", "group"],
  ["加腋筋距端部的起步距离", "s/2"],
  ["加腋筋根数计算方式", "向上取整+1"],
];

const Branch = ({ kind }: { kind?: string }) =>
  kind === "group" ? (
    <svg width="16" height="20" viewBox="0 0 16 20" fill="none">
      <rect x="2.500" y="3.500" width="12" height="12" rx="1" stroke="#888" />
      <path d="M6 9.500h5" stroke="#555" />
      <path d="M8.500 16v4" stroke="#d8d8dc" />
    </svg>
  ) : (
    <svg width="26" height="20" viewBox="0 0 26 20" fill="none" stroke="#dcdce0">
      <path d={kind === "last" ? "M8.500 0V9.500H25" : "M8.500 0V20M8.500 9.500H25"} />
    </svg>
  );

const CalcDialog = () => (
  <Dialog role="dialog" aria-label="计算设置">
    <TitleBar>
      计算设置
      <div>
        <button aria-label="最小化"><svg width="10" height="10" stroke="#444"><path d="M0 8.500h10" /></svg></button>
        <button aria-label="最大化"><svg width="10" height="10" stroke="#444" fill="none"><rect x=".5" y=".5" width="9" height="9" /></svg></button>
      </div>
    </TitleBar>
    <Tabs $gap={3} role="tablist">
      <Tab $on>计算规则</Tab>
      <Tab>节点设置</Tab>
      <Tab>箍筋设置</Tab>
      <Tab>搭接设置</Tab>
      <Tab>箍筋公式</Tab>
    </Tabs>
    <DialogBody>
      <KindBox>
        <ul>
          {kinds.map((k) => <li key={k}><Kind $on={k === "板 / 坡道"}>{k}</Kind></li>)}
        </ul>
        <Thumb />
        <Thumb $h />
      </KindBox>
      <RuleArea>
        <RuleClip>
          <RuleTable>
            <colgroup><col width="22" /><col width="351" /><col /></colgroup>
            <thead><tr><th /><th>类型名称</th><ValueHead>设置值</ValueHead></tr></thead>
            <tbody>
              {rules.map(([name, value, kind], i) => (
                <tr key={i}>
                  <IndexCell $on={kind === "edit"}>{19 + i}</IndexCell>
                  <NameCell><NameLine><Branch kind={kind} />{name}</NameLine></NameCell>
                  <ValueCell $hit={kind === "hit"} $edit={kind === "edit"}>
                    {kind === "edit" ? (
                      <ValueSelect>
                        <select aria-label={name}><option>{value}</option></select>
                        <Caret c="#4a5068" />
                      </ValueSelect>
                    ) : value}
                  </ValueCell>
                </tr>
              ))}
            </tbody>
          </RuleTable>
        </RuleClip>
        <p>提供五种选择。</p>
      </RuleArea>
    </DialogBody>
    <Footer>
      <FootBtn>导入规则</FootBtn>
      <FootBtn>导出规则</FootBtn>
      <FootBtn>恢复默认值</FootBtn>
    </Footer>
  </Dialog>
);

/* ---------- hand-drawn arrows and input-method bar ---------- */

const Marks = styled.svg`
  position: absolute;
  left: 0;
  top: 0;
  pointer-events: none;
`;
const ImeBar = styled.div`
  position: absolute;
  right: 0;
  bottom: 0;
`;

export default function App() {
  return (
    <Page>
      <Global />
      <ModuleNav />
      <Side />
      <Center>
        <Canvas>
          <Drawing />
          <ViewToolbar />
        </Canvas>
        <RebarEditor />
      </Center>
      <DisplaySettings />
      <CalcDialog />
      <Marks width="2445" height="1171" viewBox="0 0 2445 1171" fill="#ff2a14">
        <path d="M884 785L799 977l-3-1 4 16 11-13-6 0z" />
        <path d="M2116 819L1984 645l3-3-14-6 3 18 3-4z" />
      </Marks>
      <ImeBar>
        <svg width="152" height="18" viewBox="0 0 152 18" fill="none">
          <path d="M24 9.500H152V18H24z" fill="#fff" stroke="#a8c4e0" />
          <path d="M2 8L26 2l4 16H4z" fill="#f4602c" />
          <path d="M24 8c-8-1-14 0-13 4s10 1 11 6" stroke="#fff" strokeWidth="3" />
          <g stroke="#1a73e8" strokeWidth="2">
            <path d="M40 17h12M46 13v5M64 15l4 3M118 15h12M92 17h8" />
          </g>
          <circle cx="94" cy="16" r="3" fill="#1a73e8" />
          <path d="M138 15c4-3 8 0 10-2" stroke="#e0507a" strokeWidth="2" />
        </svg>
      </ImeBar>
    </Page>
  );
}
